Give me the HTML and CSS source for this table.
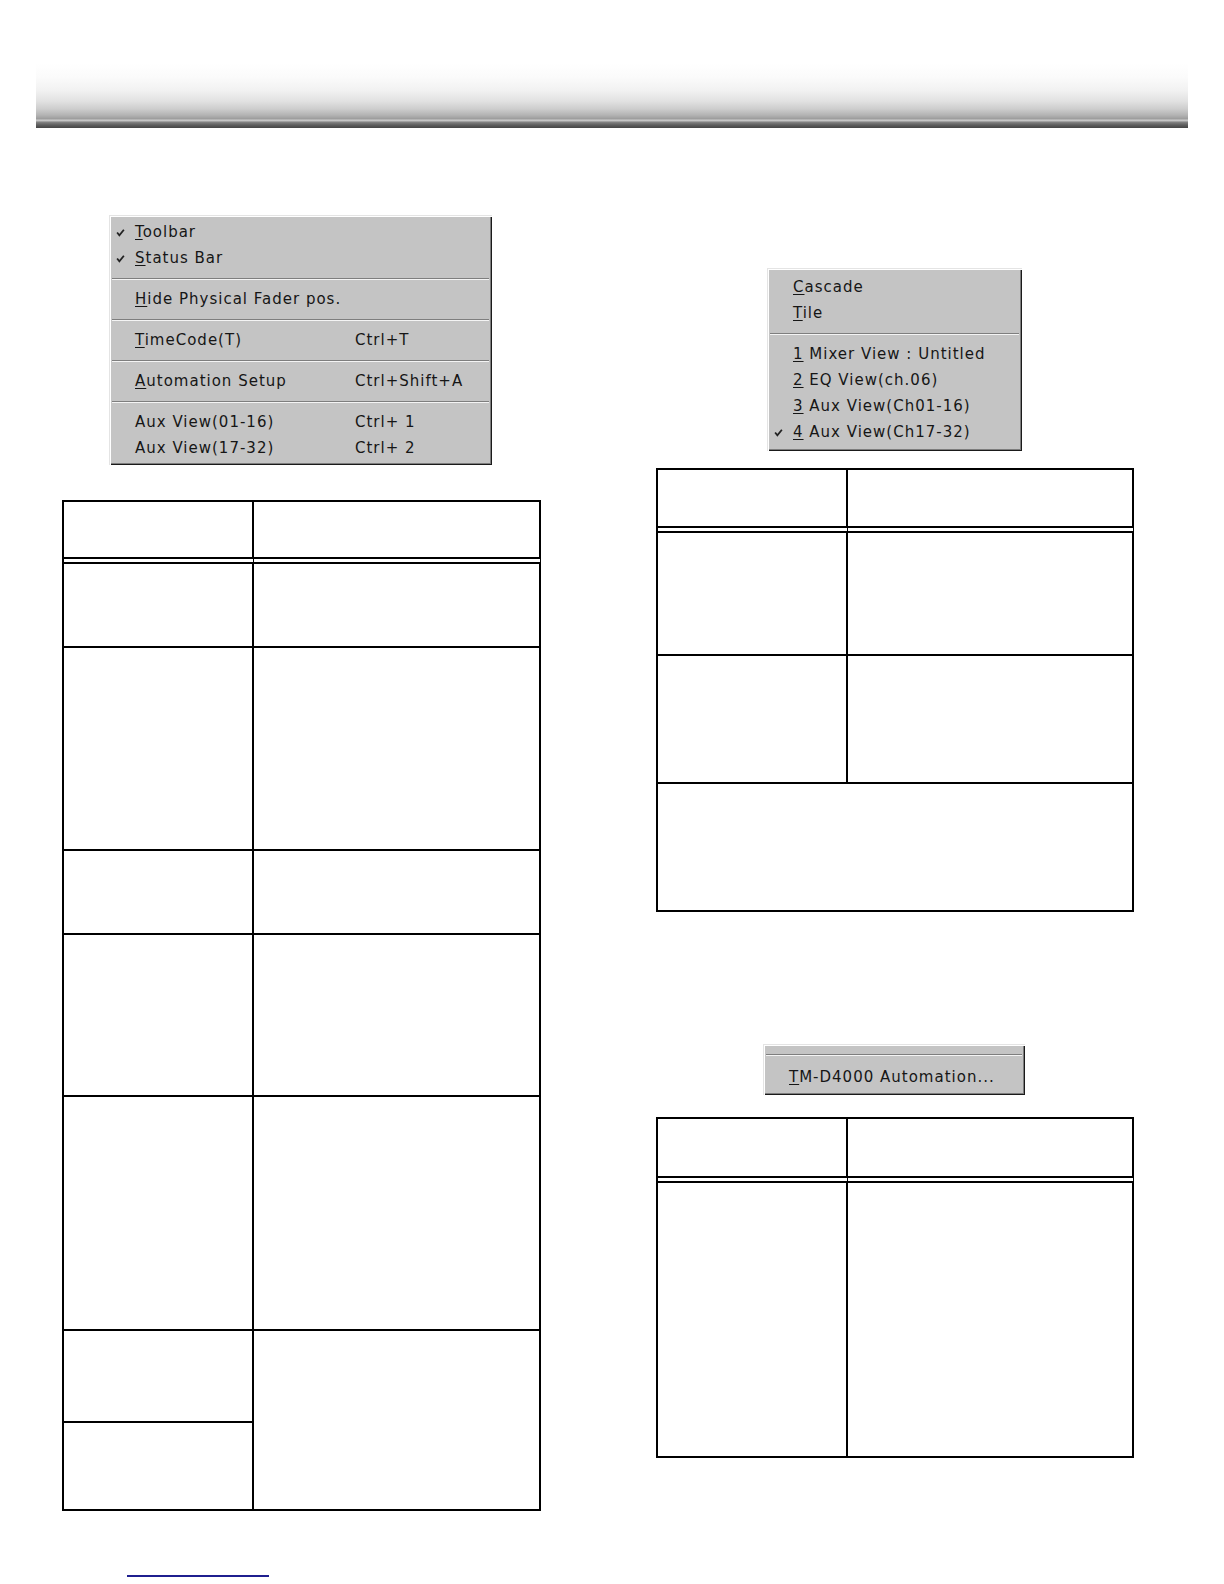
FILE: index.html
```html
<!DOCTYPE html>
<html>
<head>
<meta charset="utf-8">
<link rel="stylesheet" href="styles.css">
</head>
<body>
<div class="page">
  <div class="headbar"></div>
  <div class="cols">
    <div class="col col-left">
      <div class="menu menu-view">
        <div class="item"><span class="chk"><svg width="9" height="9" viewBox="0 0 8 8"><path d="M1 4 L3 6.5 L7 1.5" fill="none" stroke="#222" stroke-width="1.6"/></svg></span><span class="lbl"><u>T</u>oolbar</span></div>
        <div class="item"><span class="chk"><svg width="9" height="9" viewBox="0 0 8 8"><path d="M1 4 L3 6.5 L7 1.5" fill="none" stroke="#222" stroke-width="1.6"/></svg></span><span class="lbl"><u>S</u>tatus Bar</span></div>
        <div class="sep"></div>
        <div class="item"><span class="chk"></span><span class="lbl"><u>H</u>ide Physical Fader pos.</span></div>
        <div class="sep"></div>
        <div class="item"><span class="chk"></span><span class="lbl"><u>T</u>imeCode(T)</span><span class="key">Ctrl+T</span></div>
        <div class="sep"></div>
        <div class="item"><span class="chk"></span><span class="lbl"><u>A</u>utomation Setup</span><span class="key">Ctrl+Shift+A</span></div>
        <div class="sep"></div>
        <div class="item"><span class="chk"></span><span class="lbl">Aux View(01-16)</span><span class="key">Ctrl+ 1</span></div>
        <div class="item"><span class="chk"></span><span class="lbl">Aux View(17-32)</span><span class="key">Ctrl+ 2</span></div>
      </div>

      <div class="tbl tbl-left">
        <div class="cell c1 head"></div><div class="cell c2 head"></div>
        <div class="cell c1 r84"></div><div class="cell c2 r84"></div>
        <div class="cell c1 r203"></div><div class="cell c2 r203"></div>
        <div class="cell c1 r84"></div><div class="cell c2 r84"></div>
        <div class="cell c1 r162"></div><div class="cell c2 r162"></div>
        <div class="cell c1 r234"></div><div class="cell c2 r234"></div>
        <div class="cell c1 r92"></div><div class="cell c2 span2"></div>
        <div class="cell c1 r88"></div>
      </div>

      <div class="pagelink"></div>
    </div>

    <div class="col col-right">
      <div class="menu menu-window">
        <div class="item"><span class="chk"></span><span class="lbl"><u>C</u>ascade</span></div>
        <div class="item"><span class="chk"></span><span class="lbl"><u>T</u>ile</span></div>
        <div class="sep"></div>
        <div class="item"><span class="chk"></span><span class="lbl"><u>1</u> Mixer View : Untitled</span></div>
        <div class="item"><span class="chk"></span><span class="lbl"><u>2</u> EQ View(ch.06)</span></div>
        <div class="item"><span class="chk"></span><span class="lbl"><u>3</u> Aux View(Ch01-16)</span></div>
        <div class="item"><span class="chk"><svg width="9" height="9" viewBox="0 0 8 8"><path d="M1 4 L3 6.5 L7 1.5" fill="none" stroke="#222" stroke-width="1.6"/></svg></span><span class="lbl"><u>4</u> Aux View(Ch17-32)</span></div>
      </div>

      <div class="tbl tbl-r1">
        <div class="cell c1 head"></div><div class="cell c2 head"></div>
        <div class="cell c1 r123"></div><div class="cell c2 r123"></div>
        <div class="cell c1 r128"></div><div class="cell c2 r128"></div>
        <div class="cell full r128"></div>
      </div>

      <div class="menu menu-help">
        <div class="sep"></div>
        <div class="item"><span class="lbl"><u>T</u>M-D4000 Automation...</span></div>
      </div>

      <div class="tbl tbl-r2">
        <div class="cell c1 head"></div><div class="cell c2 head"></div>
        <div class="cell c1 r275"></div><div class="cell c2 r275"></div>
      </div>
    </div>
  </div>
</div>
</body>
</html>
```

FILE: styles.css
```css
* { box-sizing: border-box; }
html, body { margin: 0; padding: 0; background: #fff; }
.page { width: 1224px; min-height: 1584px; position: relative; }

.headbar {
  margin: 63px 0 0 36px;
  width: 1152px;
  height: 65px;
  background: linear-gradient(to bottom,
    #ffffff 0px, #fbfbfb 14px, #f1f1f1 28px, #e2e2e2 38px,
    #cdcdcd 46px, #b4b4b4 52px, #a2a2a2 55px, #9a9a9a 56px,
    #cfcfcf 57px, #bcbcbc 58px, #858585 59px, #6a6a6a 61px,
    #555555 63px, #454545 65px);
}

.cols {
  display: grid;
  grid-template-columns: 479px 479px;
  column-gap: 115px;
  padding-left: 62px;
}
.col { display: flex; flex-direction: column; align-items: flex-start; }

/* Menus */
.menu {
  background: #c4c4c4;
  box-shadow: inset 1px 1px 0 #e4e4e4, inset 2px 2px 0 #ffffff,
              inset -1px -1px 0 #1a1a1a, inset -2px -2px 0 #7d7d7d;
  font-family: "DejaVu Sans", "Liberation Sans", sans-serif;
  font-size: 15px;
  letter-spacing: 1px;
  color: #161616;
}
.menu u { text-decoration: underline; text-underline-offset: 2px; text-decoration-thickness: 1px; }
.item { display: flex; align-items: center; height: 26px; white-space: nowrap; }
.chk { width: 26px; flex: none; display: flex; justify-content: flex-start; padding-left: 7px; }
.chk svg { display: block; }
.lbl { flex: none; }
.key { margin-left: auto; }
.sep {
  height: 15px;
  margin: 0 3px;
  background: linear-gradient(to bottom, transparent 7px, #7e7e7e 7px, #7e7e7e 8px, #f4f4f4 8px, #f4f4f4 9px, transparent 9px);
}

.menu-view {
  margin: 87px 0 0 47px;
  width: 383px;
  height: 250px;
  padding-top: 4px;
}
.menu-view .key { width: 137px; margin-left: auto; }

.menu-window {
  margin: 140px 0 0 111px;
  width: 255px;
  height: 183px;
  padding-top: 6px;
}

.menu-help {
  margin: 132px 0 0 107px;
  width: 262px;
  height: 51px;
  padding-top: 2px;
}
.menu-help .sep { height: 18px; background: linear-gradient(to bottom, transparent 8px, #7e7e7e 8px, #7e7e7e 9px, #f4f4f4 9px, #f4f4f4 10px, transparent 10px); }
.menu-help .item { padding-left: 26px; }

/* Tables */
.tbl {
  display: grid;
  grid-template-columns: 190px 1fr;
  border-top: 2px solid #000;
  border-left: 2px solid #000;
  width: 479px;
}
.cell { border-right: 2px solid #000; border-bottom: 2px solid #000; }
.cell.head { height: 62px; border-bottom: 7px double #000; }
.cell.full { grid-column: 1 / 3; }
.cell.span2 { grid-row: span 2; }
.r84 { height: 84px; }
.r88 { height: 88px; }
.r92 { height: 92px; }
.r123 { height: 123px; }
.r128 { height: 128px; }
.r162 { height: 162px; }
.r203 { height: 203px; }
.r234 { height: 234px; }
.r275 { height: 275px; }

.tbl-left { margin-top: 35px; }
.tbl-r1 { margin-top: 17px; width: 478px; }
.tbl-r1 .cell.head { height: 63px; }
.tbl-r2 { margin-top: 22px; width: 478px; }
.tbl-r2 .cell.head { height: 64px; }

.pagelink {
  margin: 64px 0 0 65px;
  width: 142px;
  height: 2px;
  background: #1f1f8f;
}
```
